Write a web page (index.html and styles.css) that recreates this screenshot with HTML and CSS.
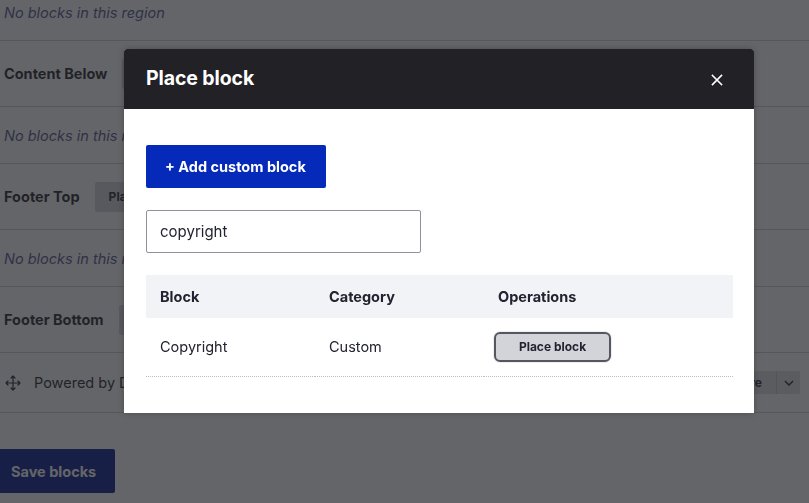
FILE: index.html
```html
<!DOCTYPE html>
<html lang="en">
<head>
<meta charset="utf-8">
<title>Place block</title>
<link rel="stylesheet" href="styles.css">
</head>
<body>
<div class="page">
  <div class="regions">
    <div class="row empty"><em>No blocks in this region</em></div>
    <div class="row region"><strong>Content Below</strong><span class="bg-place">Place block</span></div>
    <div class="row empty"><em>No blocks in this region</em></div>
    <div class="row region"><strong>Footer Top</strong><span class="bg-place">Place block</span></div>
    <div class="row empty"><em>No blocks in this region</em></div>
    <div class="row region"><strong>Footer Bottom</strong><span class="bg-place">Place block</span></div>
    <div class="row block">
      <svg class="move" width="16" height="16" viewBox="0 0 16 16" fill="none" stroke="#1f2030" stroke-width="1.2" stroke-linecap="round" stroke-linejoin="round">
        <path d="M8 1v14M1 8h14M6 3l2-2 2 2M6 13l2 2 2-2M3 6L1 8l2 2M13 6l2 2-2 2"/>
      </svg>
      <span class="block-name">Powered by Drupal</span>
      <span class="dropbutton"><span class="db-main">Configure</span><span class="db-toggle"><svg width="10" height="6" viewBox="0 0 10 6" fill="none" stroke="#222330" stroke-width="1.5"><path d="M1 1l4 4 4-4"/></svg></span></span>
    </div>
  </div>
  <div class="actions"><button class="save">Save blocks</button></div>
</div>

<div class="overlay"></div>

<div class="dialog" role="dialog">
  <div class="dialog-head">
    <h2 class="dialog-title">Place block</h2>
    <button class="close" aria-label="Close">
      <svg width="12" height="12" viewBox="0 0 12 12" stroke="#ffffff" stroke-width="1.6" stroke-linecap="square"><path d="M1.5 1.5l9 9M10.5 1.5l-9 9"/></svg>
    </button>
  </div>
  <div class="dialog-body">
    <a class="add-btn">+ Add custom block</a>
    <div class="filter">copyright</div>
    <table class="blocks">
      <thead>
        <tr><th class="c1">Block</th><th class="c2">Category</th><th class="c3">Operations</th></tr>
      </thead>
      <tbody>
        <tr><td>Copyright</td><td>Custom</td><td class="op"><span class="place-btn">Place block</span></td></tr>
      </tbody>
    </table>
  </div>
</div>
</body>
</html>
```

FILE: styles.css
```css
html, body {
  margin: 0;
  padding: 0;
}
body {
  width: 809px;
  height: 503px;
  overflow: hidden;
  background: #ffffff;
  font-family: Inter, "Noto Sans", "Liberation Sans", sans-serif;
  color: #222330;
}
.page {
  display: flex;
  flex-direction: column;
}
.regions {
  margin-top: -16px;
  display: flex;
  flex-direction: column;
}
.row {
  display: flex;
  align-items: center;
  border-bottom: 1px solid #cfcfd3;
  padding-left: 4px;
  box-sizing: border-box;
}
.empty {
  height: 57px;
}
.region {
  height: 66px;
  gap: 15px;
}
.block {
  height: 60px;
}
.empty em {
  font-size: 14.5px;
  color: #4d5290;
  font-style: italic;
}
.region strong {
  font-size: 14.5px;
  font-weight: 700;
  color: #1e1f2a;
}
.bg-place {
  display: inline-flex;
  align-items: center;
  height: 30px;
  padding: 0 14px;
  background: #d6d7dc;
  border-radius: 2px;
  font-size: 12px;
  font-weight: 700;
}
.move {
  margin-left: 1px;
}
.block-name {
  margin-left: 13px;
  font-size: 14.5px;
  color: #222330;
  flex: 1;
}
.dropbutton {
  display: flex;
  height: 23px;
  margin-right: 9px;
  background: #dfe0e4;
  border-radius: 2px;
}
.db-main {
  display: flex;
  align-items: center;
  padding: 0 14px;
  font-size: 12px;
  font-weight: 700;
  color: #222330;
  border-right: 1px solid #c5c6cc;
}
.db-toggle {
  display: flex;
  align-items: center;
  justify-content: center;
  width: 23px;
}
.actions {
  padding-top: 36px;
}
.save {
  width: 115px;
  height: 44px;
  border: 0;
  border-radius: 0 2px 2px 0;
  background: #03168f;
  color: #ffffff;
  font-family: inherit;
  font-size: 14.5px;
  font-weight: 700;
  padding: 0 0 0 11px;
  text-align: left;
}

.overlay {
  position: fixed;
  inset: 0;
  background: rgba(34, 35, 40, 0.7);
}

.dialog {
  position: fixed;
  left: 124px;
  top: 49px;
  width: 630px;
  height: 364px;
  background: #ffffff;
  border-radius: 3px 3px 0 0;
  box-shadow: 0 0 6px rgba(0, 0, 0, 0.25);
  display: flex;
  flex-direction: column;
}
.dialog-head {
  height: 60px;
  flex: none;
  background: #222226;
  border-radius: 3px 3px 0 0;
  display: flex;
  align-items: center;
  justify-content: space-between;
  padding: 0 31px 0 22px;
}
.dialog-title {
  margin: 0 0 2px 0;
  color: #ffffff;
  font-size: 19.5px;
  font-weight: 700;
  letter-spacing: -0.1px;
}
.close {
  background: none;
  border: 0;
  padding: 0;
  width: 12px;
  height: 12px;
  display: flex;
  margin-top: 1px;
}
.dialog-body {
  padding: 36px 21px 0 22px;
  display: flex;
  flex-direction: column;
  align-items: flex-start;
}
.add-btn {
  display: inline-flex;
  align-items: center;
  height: 43px;
  padding: 0 20px 0 19px;
  background: #0529b9;
  color: #ffffff;
  border-radius: 2px;
  font-size: 14.5px;
  font-weight: 700;
  box-sizing: border-box;
}
.filter {
  margin-top: 22px;
  width: 275px;
  height: 43px;
  box-sizing: border-box;
  border: 1px solid #8e929c;
  border-radius: 2px;
  padding: 0 13px;
  display: flex;
  align-items: center;
  font-size: 15px;
  color: #222330;
}
.blocks {
  margin-top: 22px;
  width: 587px;
  border-collapse: collapse;
  font-size: 14.5px;
}
.blocks th {
  height: 43px;
  padding: 0 14px;
  text-align: left;
  background: #f2f3f7;
  font-weight: 700;
  color: #222330;
}
.blocks th.c1, .blocks th.c2 {
  width: 141px;
}
.blocks td {
  height: 58px;
  padding: 0 14px;
  border-bottom: 1px dotted #b8bccb;
  box-sizing: border-box;
  color: #222330;
}
.blocks td.op {
  padding-left: 10px;
}
.place-btn {
  display: inline-flex;
  align-items: center;
  justify-content: center;
  width: 117px;
  height: 30px;
  box-sizing: border-box;
  border: 2px solid #55575d;
  border-radius: 6px;
  background: #d3d4d9;
  font-size: 12px;
  font-weight: 700;
  color: #222330;
  box-shadow: 0 0 0 1px #eceef3;
}
```
